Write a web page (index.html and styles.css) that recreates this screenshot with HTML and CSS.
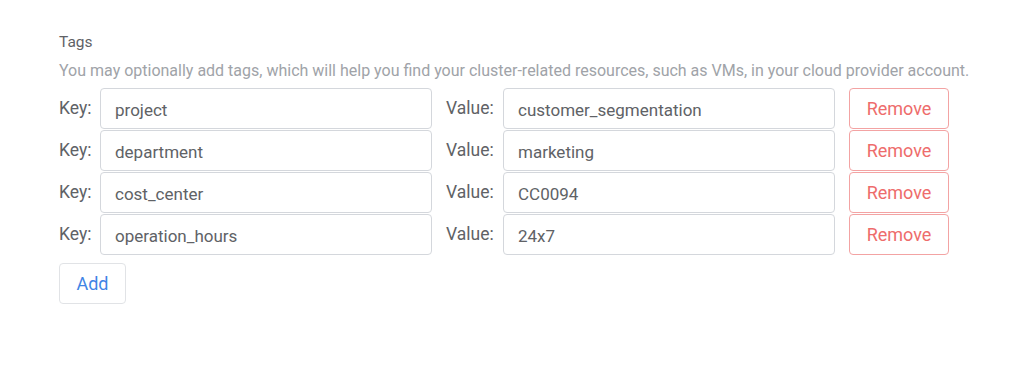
FILE: index.html
```html
<!DOCTYPE html>
<html>
<head>
<meta charset="utf-8">
<link rel="stylesheet" href="styles.css">
</head>
<body>
<div class="tags">
  <div class="title">Tags</div>
  <div class="desc">You may optionally add tags, which will help you find your cluster-related resources, such as VMs, in your cloud provider account.</div>
  <div class="rows">
    <div class="row">
      <label class="lbl key">Key:</label>
      <div class="input">project</div>
      <label class="lbl val">Value:</label>
      <div class="input">customer_segmentation</div>
      <button class="btn remove">Remove</button>
    </div>
    <div class="row">
      <label class="lbl key">Key:</label>
      <div class="input">department</div>
      <label class="lbl val">Value:</label>
      <div class="input">marketing</div>
      <button class="btn remove">Remove</button>
    </div>
    <div class="row">
      <label class="lbl key">Key:</label>
      <div class="input">cost_center</div>
      <label class="lbl val">Value:</label>
      <div class="input">CC0094</div>
      <button class="btn remove">Remove</button>
    </div>
    <div class="row">
      <label class="lbl key">Key:</label>
      <div class="input">operation_hours</div>
      <label class="lbl val">Value:</label>
      <div class="input">24x7</div>
      <button class="btn remove">Remove</button>
    </div>
  </div>
  <button class="btn add">Add</button>
</div>
</body>
</html>
```
FILE: styles.css
```css
html, body {
  margin: 0;
  padding: 0;
  background: #ffffff;
}
body {
  font-family: Roboto, "Liberation Sans", sans-serif;
  color: #606266;
}
.tags {
  padding: 32px 0 0 59px;
}
.title {
  font-size: 15.5px;
  line-height: 20px;
  color: #606266;
}
.desc {
  margin-top: 9px;
  font-size: 16px;
  line-height: 20px;
  color: #a0a3a8;
  white-space: nowrap;
}
.rows {
  margin-top: 7px;
  display: flex;
  flex-direction: column;
  gap: 1px;
}
.row {
  display: flex;
  align-items: flex-start;
  height: 41px;
}
.lbl {
  font-size: 17.5px;
  line-height: 20px;
  padding-top: 10px;
  color: #606266;
}
.key {
  width: 41px;
}
.val {
  width: 57px;
  margin-left: 14px;
}
.input {
  box-sizing: border-box;
  width: 332px;
  height: 41px;
  border: 1px solid #d4d7dc;
  border-radius: 4px;
  padding: 2px 14px 0;
  font-size: 17px;
  color: #606266;
  display: flex;
  align-items: center;
}
.btn {
  box-sizing: border-box;
  font-family: Roboto, "Liberation Sans", sans-serif;
  font-size: 18px;
  background: #ffffff;
  border-radius: 4px;
  padding: 0;
  height: 41px;
  cursor: pointer;
}
.remove {
  width: 100px;
  margin-left: 14px;
  color: #ee6c6c;
  border: 1px solid #f3a3a3;
}
.add {
  margin-top: 8px;
  width: 67px;
  color: #3f84e5;
  border: 1px solid #e1e3e6;
}
```
